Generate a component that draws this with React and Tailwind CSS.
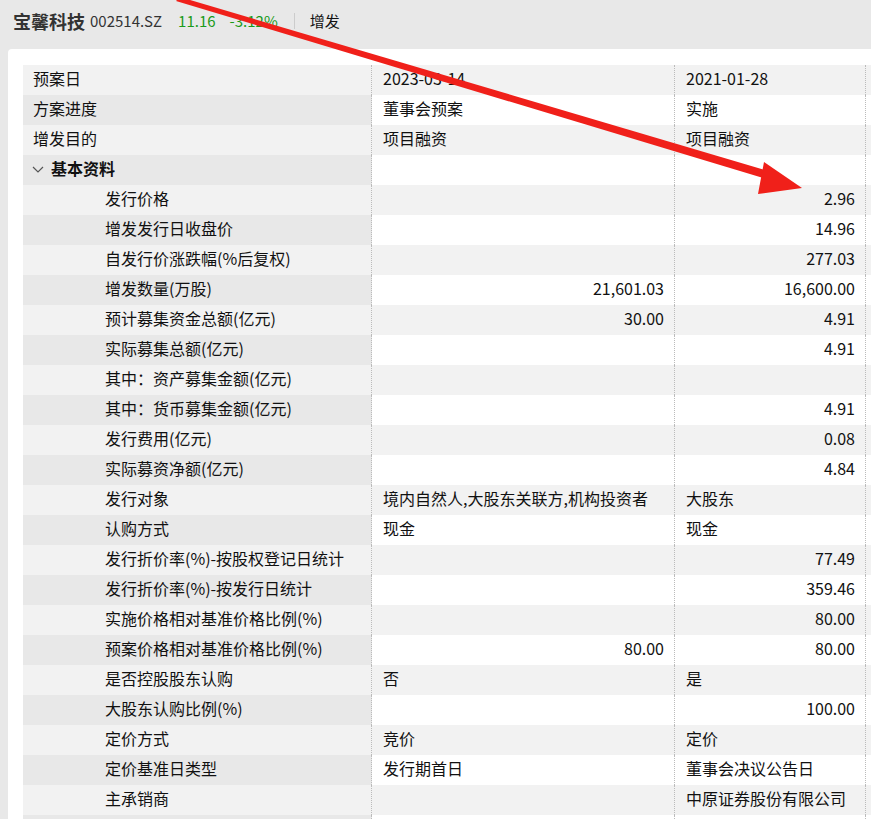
import React from "react";

const rows = [
  { label: "预案日", a: "2023-03-14", b: "2021-01-28" },
  { label: "方案进度", a: "董事会预案", b: "实施" },
  { label: "增发目的", a: "项目融资", b: "项目融资" },
  { label: "基本资料", group: true },
  { label: "发行价格", a: "", b: "2.96", num: true, sub: true },
  { label: "增发发行日收盘价", a: "", b: "14.96", num: true, sub: true },
  { label: "自发行价涨跌幅(%后复权)", a: "", b: "277.03", num: true, sub: true },
  { label: "增发数量(万股)", a: "21,601.03", b: "16,600.00", num: true, sub: true },
  { label: "预计募集资金总额(亿元)", a: "30.00", b: "4.91", num: true, sub: true },
  { label: "实际募集总额(亿元)", a: "", b: "4.91", num: true, sub: true },
  { label: "其中：资产募集金额(亿元)", a: "", b: "", num: true, sub: true },
  { label: "其中：货币募集金额(亿元)", a: "", b: "4.91", num: true, sub: true },
  { label: "发行费用(亿元)", a: "", b: "0.08", num: true, sub: true },
  { label: "实际募资净额(亿元)", a: "", b: "4.84", num: true, sub: true },
  { label: "发行对象", a: "境内自然人,大股东关联方,机构投资者", b: "大股东", sub: true },
  { label: "认购方式", a: "现金", b: "现金", sub: true },
  { label: "发行折价率(%)-按股权登记日统计", a: "", b: "77.49", num: true, sub: true },
  { label: "发行折价率(%)-按发行日统计", a: "", b: "359.46", num: true, sub: true },
  { label: "实施价格相对基准价格比例(%)", a: "", b: "80.00", num: true, sub: true },
  { label: "预案价格相对基准价格比例(%)", a: "80.00", b: "80.00", num: true, sub: true },
  { label: "是否控股股东认购", a: "否", b: "是", sub: true },
  { label: "大股东认购比例(%)", a: "", b: "100.00", num: true, sub: true },
  { label: "定价方式", a: "竞价", b: "定价", sub: true },
  { label: "定价基准日类型", a: "发行期首日", b: "董事会决议公告日", sub: true },
  { label: "主承销商", a: "", b: "中原证券股份有限公司", sub: true },
  { label: "", a: "", b: "", sub: true },
];

export default function App() {
  return (
    <div
      className="relative w-[871px] h-[819px] overflow-hidden bg-[#e8e8e8] text-[#111]"
      style={{ fontFamily: '"Noto Sans CJK SC", "Noto Sans", sans-serif' }}
    >
      <div className="h-[42px] flex items-center pl-[13px]">
        <span className="font-bold text-[18px] text-[#333]">宝馨科技</span>
        <span className="ml-[5px] text-[15px] text-[#333]">002514.SZ</span>
        <span className="ml-[16px] text-[15px] text-[#1a9a1a]">11.16</span>
        <span className="ml-[14px] text-[15px] text-[#1a9a1a]">-3.12%</span>
        <span className="ml-[16px] h-[16px] w-px bg-[#ccc]" />
        <span className="ml-[15px] text-[15px]">增发</span>
      </div>
      <div className="ml-[8px] mt-[7px] bg-white rounded-tl-[4px] pt-[16px] pl-[15px] h-[780px]">
        <div className="flex flex-col">
          {rows.map((r, i) => {
            const odd = i % 2 === 0;
            const labelBg = odd ? "bg-[#f2f2f2]" : "bg-[#e8e8e8]";
            const dataBg = odd ? "bg-[#f2f2f2]" : "bg-white";
            return (
              <div key={i} className="flex h-[30px] text-[16px] leading-[27px]">
                <div className={`w-[349px] shrink-0 border-r border-dotted border-[#bbb] ${labelBg} ${r.sub ? "pl-[82px]" : "pl-[10px]"}`}>
                  {r.group ? (
                    <span className="flex items-center font-bold">
                      <svg width="14" height="14" viewBox="0 0 14 14" className="mr-[6px] ml-[-2px]">
                        <path d="M2 5l5 5 5-5" fill="none" stroke="#555" strokeWidth="1.2" />
                      </svg>
                      {r.label}
                    </span>
                  ) : (
                    r.label
                  )}
                </div>
                <div className={`w-[302px] shrink-0 ${dataBg} ${r.num ? "text-right pr-[10px]" : "pl-[11px]"}`}>{r.a}</div>
                <div className={`w-[192px] shrink-0 border-l border-r border-dotted border-[#bbb] ${dataBg} ${r.num ? "text-right pr-[10px]" : "pl-[11px]"}`}>{r.b}</div>
                <div className={`flex-1 ${dataBg}`} />
              </div>
            );
          })}
        </div>
      </div>
      <svg className="absolute inset-0 pointer-events-none" width="871" height="819">
        <polygon points="176,1 180,-3 772,172 770,180" fill="#f0201a" />
        <polygon points="802,188 764,162 758,194" fill="#f0201a" />
      </svg>
    </div>
  );
}
